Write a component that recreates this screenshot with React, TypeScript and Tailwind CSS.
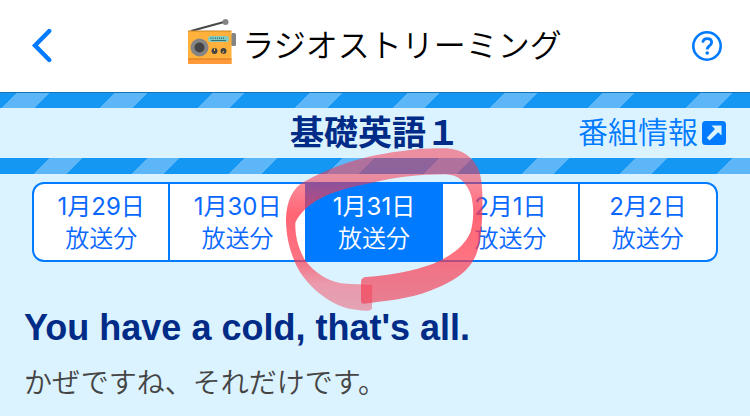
const days = ['1月29日', '1月30日', '1月31日', '2月1日', '2月2日'];
const selected = 2;

function RadioIcon() {
  return (
    <svg className="h-14 w-12 shrink-0" viewBox="0 0 48 56" aria-hidden="true">
      <path d="M3 13 36 4" stroke="#484848" strokeWidth="2" />
      <circle cx="37.5" cy="4" r="3" fill="#858585" />
      <rect x="43" y="15" width="5" height="13" rx="1.5" fill="#858585" />
      <rect x="0" y="13" width="43.5" height="33" fill="#ffb13b" />
      <rect x="0" y="12.5" width="43.5" height="1" fill="#c98620" />
      <rect x="0" y="41" width="43.5" height="5" fill="#ff9a3b" />
      <rect x="0" y="40.5" width="43.5" height="1" fill="#d9791c" />
      <circle cx="11.5" cy="29.5" r="9" fill="#858585" />
      <circle cx="11.5" cy="29.5" r="5" fill="#444" />
      <rect x="20" y="18" width="21" height="6" rx="3" fill="#80cbc4" />
      <path d="M23 22.5h15" stroke="#3f6f6c" strokeWidth="1" />
      <path d="M22.5 20.3h3M27 20.3h10" stroke="#3f6f6c" strokeWidth="1.6" strokeDasharray="1 1" />
      <circle cx="26.5" cy="33" r="3" fill="#444" />
      <circle cx="35.5" cy="33" r="3" fill="#444" />
      <path d="M26.5 33v-2.5M35.5 33l-.8 2.4" stroke="#ffb13b" strokeWidth="1" />
    </svg>
  );
}

function MarkerCircle() {
  return (
    <svg
      className="pointer-events-none absolute left-1/2 -top-[42px] -ml-[95px] h-[175px] w-[220px]"
      viewBox="0 0 660 525"
      aria-hidden="true"
    >
      <defs>
        <linearGradient id="ink" gradientUnits="userSpaceOnUse" x1="0" y1="20" x2="0" y2="500">
          <stop offset="0" stopColor="#fb3a50" stopOpacity="0.54" />
          <stop offset="0.2" stopColor="#f5354f" stopOpacity="0.54" />
          <stop offset="0.42" stopColor="#ff3a4e" stopOpacity="0.78" />
          <stop offset="0.66" stopColor="#ff3a4e" stopOpacity="0.72" />
          <stop offset="1" stopColor="#f0334c" stopOpacity="0.6" />
        </linearGradient>
        <linearGradient id="tail" gradientUnits="userSpaceOnUse" x1="0" y1="360" x2="0" y2="500">
          <stop offset="0" stopColor="#ff3a4e" stopOpacity="0.71" />
          <stop offset="0.5" stopColor="#fb3a50" stopOpacity="0.48" />
          <stop offset="1" stopColor="#f0334c" stopOpacity="0.42" />
        </linearGradient>
      </defs>
      <path
        fill="url(#ink)"
        d="M42 360C22 310 18 270 18 235C20 180 40 140 78 122C140 88 210 62 290 45C360 31 440 22 500 25C545 28 580 50 597 92C608 125 608 165 607 215C605 265 602 310 588 345C565 400 510 430 450 452C390 476 320 482 250 491Q243 491 243 482L243 425Q244 411 260 411C330 405 400 393 460 371C510 350 555 318 572 275C582 240 582 200 573 165C560 128 535 103 495 103C420 103 340 112 270 130C210 142 160 155 120 176C85 194 58 220 46 248C45 290 55 325 75 360Z"
      />
      <path
        fill="url(#tail)"
        d="M42 360H75C100 396 140 421 180 429C210 434 240 432 277 435L276 505Q275 512 262 512C215 510 180 503 140 476C98 448 60 408 42 360Z"
      />
    </svg>
  );
}

export default function App() {
  return (
    <div className="min-h-screen bg-[#dbf2ff] font-['Liberation_Sans','Noto_Sans_CJK_JP',sans-serif]">
      <header className="grid h-[92px] grid-cols-[1fr_auto_1fr] items-center bg-white px-7">
        <button type="button" aria-label="戻る" className="h-10 w-7 justify-self-start text-[#007aff]">
          <svg className="h-10 w-7" viewBox="0 0 28 40" fill="none" stroke="currentColor" strokeWidth="4.4" aria-hidden="true">
            <path d="M21.3 5 7 19.5 21.3 34" strokeLinecap="round" />
          </svg>
        </button>
        <h1 className="flex items-center gap-1.5 text-[32px] font-[350] leading-10 text-black">
          <RadioIcon />
          <span>ラジオストリーミング</span>
        </h1>
        <button type="button" aria-label="ヘルプ" className="h-8 w-8 justify-self-end text-[#007aff]">
          <svg className="h-8 w-8" viewBox="0 0 32 32" fill="none" stroke="currentColor" aria-hidden="true">
            <circle cx="17" cy="16" r="13.7" strokeWidth="2.6" />
            <path d="M12.8 12.7C13 10 14.8 8.7 17.2 8.7C19.8 8.7 21.6 10.2 21.6 12.5C21.6 15.6 17.2 15.8 17.2 19.4" strokeWidth="2.8" />
            <circle cx="17.2" cy="23" r="1.8" fill="currentColor" stroke="none" />
          </svg>
        </button>
      </header>

      <section className="h-[82px] border-t border-[#1373b5] bg-[repeating-linear-gradient(135deg,#1496f3_0px,#1496f3_12px,#5cb6f8_12px,#5cb6f8_35px,#1496f3_35px,#1496f3_69px)] pt-[15px] pb-4">
        <div className="grid h-full grid-cols-[1fr_auto_1fr] items-center bg-[#dbf2ff] px-6">
          <h2 className="col-start-2 text-[34px] font-bold leading-10 text-[#002b87]">基礎英語１</h2>
          <a href="#info" className="flex items-center gap-1 justify-self-end text-[30px] font-[350] leading-10 text-[#007aff]">
            番組情報
            <svg className="h-6 w-6" viewBox="0 0 24 24" aria-hidden="true">
              <rect width="24" height="24" rx="3.5" fill="#007aff" />
              <path d="M9.5 4.5H19.500V14.500L16.200 11.300 7.500 19.500 4.800 16.700 13 8Z" fill="#dbf2ff" />
            </svg>
          </a>
        </div>
      </section>

      <main className="px-6 pt-2">
        <div className="relative mx-2">
          <div role="tablist" className="grid grid-cols-5 divide-x-2 divide-[#007aff] overflow-hidden rounded-xl border-2 border-[#007aff] bg-white">
            {days.map((day, i) => (
              <button
                key={day}
                type="button"
                role="tab"
                aria-selected={i === selected}
                className={
                  "flex h-[76px] flex-col items-center justify-center pt-0.5 font-['Inter','Noto_Sans_CJK_JP',sans-serif] text-2xl font-[350] leading-8 " +
                  (i === selected ? 'bg-[#007aff] text-white' : 'text-[#0a68ff]')
                }
              >
                <span className="font-normal">{day}</span>
                <span>放送分</span>
              </button>
            ))}
          </div>
          <MarkerCircle />
        </div>
        <p className="mt-[46px] text-4xl font-bold leading-10 text-[#002b87]">You have a cold, that's all.</p>
        <p className="mt-4 text-[28px] font-[350] leading-10 text-[#444]">かぜですね、それだけです。</p>
      </main>
    </div>
  );
}
